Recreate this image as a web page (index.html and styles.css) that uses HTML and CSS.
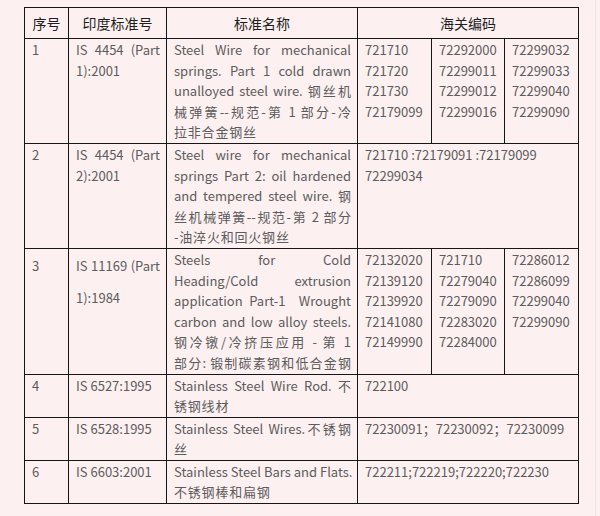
FILE: index.html
```html
<!DOCTYPE html>
<html lang="zh">
<head>
<meta charset="utf-8">
<title>印度标准</title>
<link rel="stylesheet" href="styles.css">
</head>
<body>
<div class="page">
<table class="std">
<colgroup>
<col class="c-no"><col class="c-is"><col class="c-name"><col class="c-code"><col class="c-code2"><col class="c-code">
</colgroup>
<thead>
<tr><th>序号</th><th>印度标准号</th><th>标准名称</th><th colspan="3">海关编码</th></tr>
</thead>
<tbody>
<tr>
<td>1</td>
<td><span class="j">IS 4454 (Part</span><span>1):2001</span></td>
<td><span class="j">Steel Wire for mechanical</span><span class="j">springs. Part 1 cold drawn</span><span class="j">unalloyed steel wire. 钢丝机</span><span class="j">械弹簧--规范-第 1 部分-冷</span><span class="zh">拉非合金钢丝</span></td>
<td>721710<br>721720<br>721730<br>72179099</td>
<td>72292000<br>72299011<br>72299012<br>72299016</td>
<td>72299032<br>72299033<br>72299040<br>72299090</td>
</tr>
<tr>
<td>2</td>
<td><span class="j">IS 4454 (Part</span><span>2):2001</span></td>
<td><span class="j">Steel wire for mechanical</span><span class="j">springs Part 2: oil hardened</span><span class="j">and tempered steel wire. 钢</span><span class="j">丝机械弹簧--规范-第 2 部分</span><span class="zh">-油淬火和回火钢丝</span></td>
<td colspan="3">721710 :72179091 :72179099<br>72299034</td>
</tr>
<tr>
<td class="low">3</td>
<td class="low"><span class="j">IS 11169 (Part</span><span class="gap">1):1984</span></td>
<td><span class="j">Steels for Cold</span><span class="j">Heading/Cold extrusion</span><span class="j">application Part-1&nbsp; Wrought</span><span class="j">carbon and low alloy steels.</span><span class="j">钢冷镦/冷挤压应用 - 第 1</span><span class="j">部分: 锻制碳素钢和低合金钢</span></td>
<td>72132020<br>72139120<br>72139920<br>72141080<br>72149990</td>
<td>721710<br>72279040<br>72279090<br>72283020<br>72284000</td>
<td>72286012<br>72286099<br>72299040<br>72299090</td>
</tr>
<tr>
<td>4</td>
<td>IS 6527:1995</td>
<td><span class="j">Stainless Steel Wire Rod. 不</span><span class="zh">锈钢线材</span></td>
<td colspan="3">722100</td>
</tr>
<tr>
<td>5</td>
<td>IS 6528:1995</td>
<td><span class="j">Stainless Steel Wires.不锈钢</span><span class="zh">丝</span></td>
<td colspan="3"><span class="j wide">72230091；72230092；72230099</span></td>
</tr>
<tr>
<td>6</td>
<td>IS 6603:2001</td>
<td><span class="j">Stainless Steel Bars and Flats.</span><span class="zh">不锈钢棒和扁钢</span></td>
<td colspan="3">722211;722219;722220;722230</td>
</tr>
</tbody>
</table>
</div>
</body>
</html>
```
FILE: styles.css
```css
html, body {
  margin: 0;
  padding: 0;
  background: #fdf0f1;
}
.page {
  width: 596px;
  height: 516px;
  box-sizing: border-box;
  padding: 7px 0 0 24px;
  border-right: 1px solid #f2e4e5;
  font-family: "Noto Sans CJK SC", sans-serif;
  font-size: 13px;
  color: #5c5c5c;
}
.std {
  border-collapse: collapse;
  table-layout: fixed;
  width: 555px;
}
.c-no { width: 44px; }
.c-is { width: 98px; }
.c-name { width: 191px; }
.c-code { width: 74px; }
.c-code2 { width: 73px; }
.std th, .std td {
  border: 1px solid #161616;
  vertical-align: top;
  text-align: left;
  padding: 1px 6px 0 7px;
  line-height: 20.6px;
  white-space: nowrap;
}
.std th {
  height: 30px;
  vertical-align: middle;
  text-align: center;
  font-weight: 400;
  font-size: 14px;
  color: #1e1e1e;
  padding: 0;
}
.std td span {
  display: block;
}
.std td .j {
  text-align: justify;
  text-align-last: justify;
}
.std td .zh {
  letter-spacing: 0.8px;
}
.std td.low {
  padding-top: 7px;
}
.std td .gap {
  margin-top: 11px;
}
.std td .wide {
  width: 204px;
}
```
